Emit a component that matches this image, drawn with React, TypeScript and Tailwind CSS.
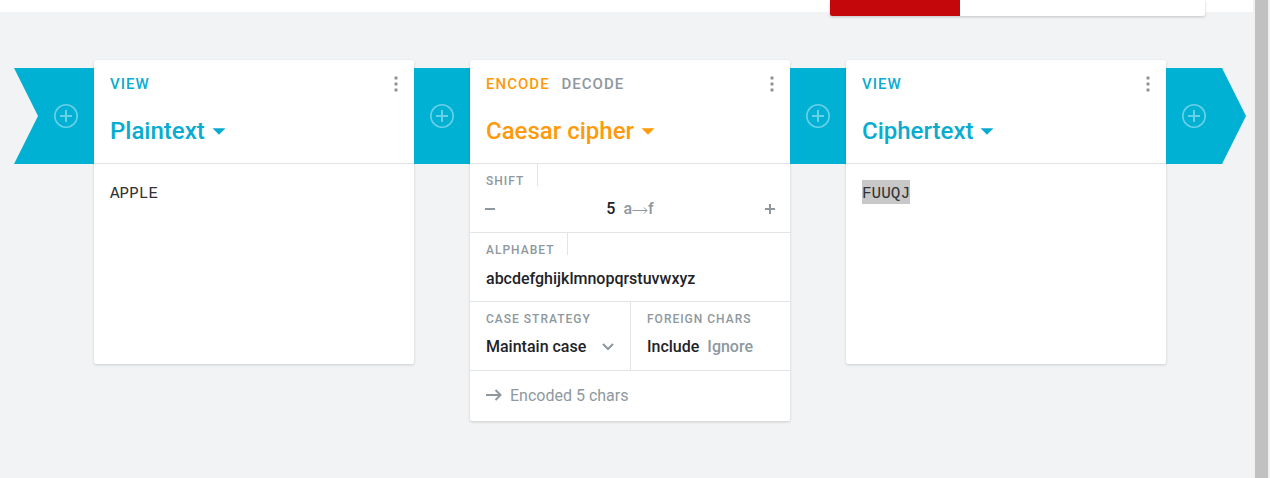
import type { ReactNode } from "react";

function AddButton() {
  return (
    <button className="flex h-6 w-6 items-center justify-center" aria-label="Add">
      <svg width="24" height="24" viewBox="0 0 24 24" fill="none" stroke="#fff" strokeOpacity="0.4">
        <circle cx="12" cy="12" r="11.2" strokeWidth="1.6" />
        <path d="M6 12H18M12 6V11M12 13V18" strokeWidth="2" />
      </svg>
    </button>
  );
}

function Pipe({ className = "w-14" }: { className?: string }) {
  return (
    <div className={`mt-2 flex h-24 shrink-0 items-center bg-[#00b1d4] px-4 ${className}`}>
      <AddButton />
    </div>
  );
}

function Tabs({ items, active }: { items: string[]; active: string }) {
  return (
    <div className="flex gap-[11.7px] text-[15px] leading-6 font-medium tracking-[1.03px]">
      {items.map((item, i) => (
        <span key={item} className={i === 0 ? active : "text-[#8e989e]"}>
          {item}
        </span>
      ))}
    </div>
  );
}

function Card({
  tabs,
  title,
  tone,
  className = "",
  children,
}: {
  tabs: string[];
  title: string;
  tone: string;
  className?: string;
  children: ReactNode;
}) {
  return (
    <section
      className={`w-80 shrink-0 rounded-[2px] bg-white shadow-[0_1px_3px_rgba(0,0,0,0.16)] ${className}`}
    >
      <header className="h-[104px] border-b border-[#e2e5e8] pl-4">
        <div className="flex h-12 items-center justify-between pr-[15px]">
          <Tabs items={tabs} active={tone} />
          <svg width="6" height="16" viewBox="0 0 6 16" fill="#8e989e">
            <circle cx="3" cy="2" r="1.75" />
            <circle cx="3" cy="8" r="1.75" />
            <circle cx="3" cy="14" r="1.75" />
          </svg>
        </div>
        <div className={`flex h-[46px] items-center gap-[7px] ${tone}`}>
          <h2 className="text-2xl font-medium">{title}</h2>
          <svg width="14" height="7" viewBox="0 0 14 7" fill="currentColor" className="mt-px">
            <path d="M0.5 0.3H13.5L7 6.8Z" />
          </svg>
        </div>
      </header>
      {children}
    </section>
  );
}

function Label({ children }: { children: ReactNode }) {
  return (
    <div className="text-[12px] leading-4 font-medium tracking-[1px] whitespace-nowrap text-[#8e989e]">
      {children}
    </div>
  );
}

function TabLabel({ children }: { children: ReactNode }) {
  return (
    <div className="flex">
      <div className="h-[22px] border-r border-[#e2e5e8] pt-[9px] pr-[12.4px] pl-4">
        <Label>{children}</Label>
      </div>
    </div>
  );
}

function PlainBody({ text, selected = false }: { text: string; selected?: boolean }) {
  return (
    <div className="flex p-4 font-['Liberation_Mono',monospace] text-[16px] leading-7 text-[#333]">
      <span className={`block h-6 w-12 ${selected ? "bg-[#c8c8c8]" : ""}`}>{text}</span>
    </div>
  );
}

export default function App() {
  return (
    <div className="flex h-[478px] w-[1270px] overflow-hidden bg-[#f2f3f5] font-[Roboto,sans-serif] text-[#1e2327]">
      <main className="w-[1253px] shrink-0">
        <div className="flex h-3 justify-end bg-white pr-12">
          <div className="flex h-4 w-[375px] overflow-visible rounded-b-[2px] bg-white shadow-[0_1px_3px_rgba(0,0,0,0.2)]">
            <div className="h-4 w-[130px] rounded-bl-[2px] bg-[#c4070a]" />
          </div>
        </div>
        <div className="flex items-start pt-12 pl-3.5">
          <Pipe className="w-20 justify-end [clip-path:polygon(0_0,100%_0,100%_100%,0_100%,24px_50%)]" />
          <Card tabs={["VIEW"]} title="Plaintext" tone="text-[#09acd0]" className="h-[304px]">
            <PlainBody text="APPLE" />
          </Card>
          <Pipe />
          <Card tabs={["ENCODE", "DECODE"]} title="Caesar cipher" tone="text-[#ff9a0a]">
            <div className="h-[69px] border-b border-[#e2e5e8]">
              <TabLabel>SHIFT</TabLabel>
              <div className="mt-px flex h-[44px] items-center justify-between px-[14px] text-[#8e989e]">
                <svg width="12" height="12" viewBox="0 0 12 12" stroke="currentColor" strokeWidth="2">
                  <path d="M1 6H11" />
                </svg>
                <div className="flex gap-2 font-medium leading-6">
                  <span className="text-[#1e2327]">5</span>
                  <span className="flex items-center">
                    a
                    <svg width="16" height="8" viewBox="0 0 16 8" className="mt-px" fill="none" stroke="currentColor">
                      <path d="M0.5 4.5H15M12 1.5L15 4.5L12 7.5" />
                    </svg>
                    f
                  </span>
                </div>
                <svg width="12" height="12" viewBox="0 0 12 12" stroke="currentColor" strokeWidth="2">
                  <path d="M1 6H11M6 1V11" />
                </svg>
              </div>
            </div>
            <div className="h-[69px] border-b border-[#e2e5e8]">
              <TabLabel>ALPHABET</TabLabel>
              <div className="px-4 pt-3 leading-6 font-medium">abcdefghijklmnopqrstuvwxyz</div>
            </div>
            <div className="flex h-[69px] border-b border-[#e2e5e8]">
              <div className="w-[161px] border-r border-[#e2e5e8] pt-[9px] pr-4 pl-4">
                <Label>CASE STRATEGY</Label>
                <div className="mt-2 flex items-center justify-between leading-6 font-medium">
                  Maintain case
                  <svg width="12" height="8" viewBox="0 0 12 8" fill="none" stroke="#8e989e" strokeWidth="2">
                    <path d="M1 1L6 6L11 1" />
                  </svg>
                </div>
              </div>
              <div className="pt-[9px] pl-4">
                <Label>FOREIGN CHARS</Label>
                <div className="mt-2 flex gap-2 leading-6 font-medium">
                  <span>Include</span>
                  <span className="text-[#8e989e]">Ignore</span>
                </div>
              </div>
            </div>
            <div className="flex h-[50px] items-center gap-2 pl-4 text-[#8e989e]">
              <svg width="16" height="12" viewBox="0 0 16 12" className="-mt-0.5" fill="none" stroke="currentColor" strokeWidth="2">
                <path d="M0 6H15M9.5 1L14.5 6L9.5 11" />
              </svg>
              <span>Encoded 5 chars</span>
            </div>
          </Card>
          <Pipe />
          <Card tabs={["VIEW"]} title="Ciphertext" tone="text-[#09acd0]" className="h-[304px]">
            <PlainBody text="FUUQJ" selected />
          </Card>
          <Pipe className="w-20 [clip-path:polygon(0_0,56px_0,100%_50%,56px_100%,0_100%)]" />
        </div>
      </main>
      <div className="flex w-[17px] shrink-0 bg-[#f1f1f1] pl-0.5">
        <div className="h-full w-[13px] bg-[#c1c1c1]" />
      </div>
    </div>
  );
}
